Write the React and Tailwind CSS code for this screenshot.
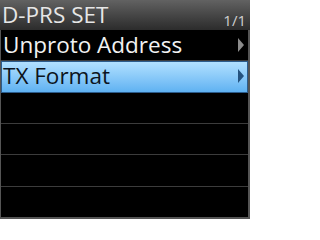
import React from "react";

function Arrow({ color }) {
  return (
    <svg width="6" height="14" viewBox="0 0 6 14" className="shrink-0">
      <polygon points="0,0 6,7 0,14" fill={color} />
    </svg>
  );
}

export default function App() {
  const rows = [
    { label: "Unproto Address", arrow: true },
    { label: "TX Format", arrow: true, selected: true },
    {},
    {},
    {},
    {},
  ];
  return (
    <div
      className="w-[250px] h-[219px] bg-black flex flex-col overflow-hidden"
      style={{ fontFamily: "'Open Sans', 'Noto Sans', sans-serif" }}
    >
      <div className="h-[30px] shrink-0 bg-gradient-to-b from-[#626262] to-[#2c2c2c] flex items-end justify-between pl-[2px] pr-[4px]">
        <span className="text-[22.5px] leading-none text-[#e6e6e6] pb-[4px]">D-PRS SET</span>
        <span className="text-[15px] leading-none text-[#d0d0d0] pb-[2px]">1/1</span>
      </div>
      <div className="flex-1 flex flex-col border-l border-r-2 border-b-2 border-[#555]">
        {rows.map((r, i) => (
          <div
            key={i}
            className={
              "flex-1 flex items-center justify-between pl-[1px] pr-[4px] " +
              (i < rows.length - 1 ? "border-b border-[#3c3c3c] " : "") +
              (r.selected
                ? "bg-gradient-to-b from-[#b4e2ff] to-[#5fb2f2] outline outline-1 -outline-offset-1 outline-[#2c5c8c]"
                : "")
            }
          >
            {r.label ? (
              <>
                <span
                  className={
                    "text-[22.5px] leading-none pl-[1px] " +
                    (r.selected ? "text-[#0c1420]" : "text-[#f2f2f2]")
                  }
                >
                  {r.label}
                </span>
                <Arrow color={r.selected ? "#24527e" : "#8c8c8c"} />
              </>
            ) : null}
          </div>
        ))}
      </div>
    </div>
  );
}
